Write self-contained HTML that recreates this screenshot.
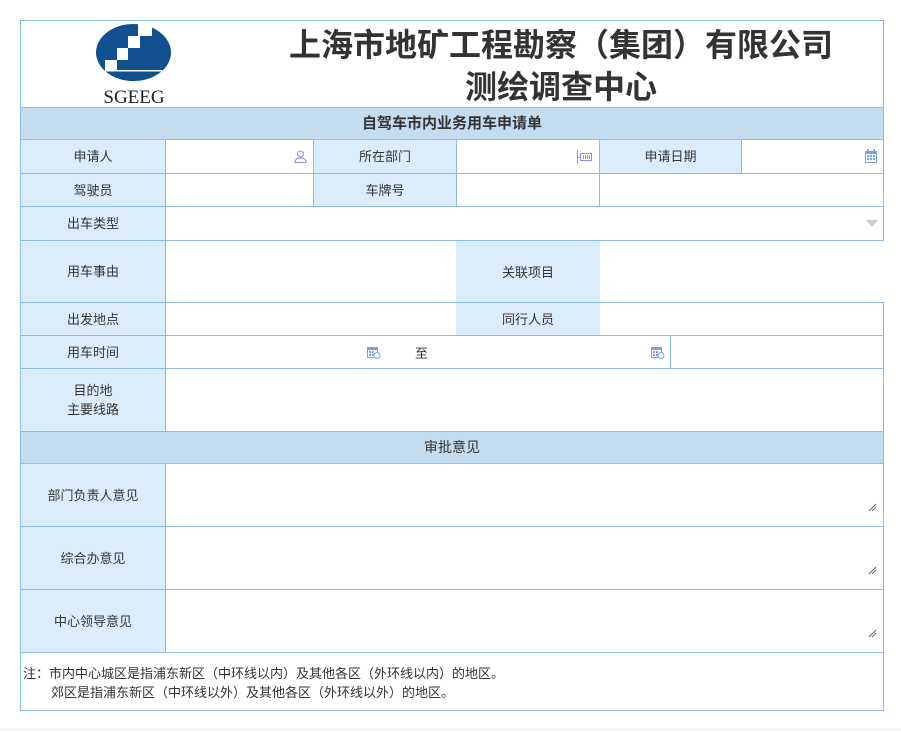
<!DOCTYPE html>
<html><head><meta charset="utf-8">
<style>
*{margin:0;padding:0;box-sizing:border-box}
body{width:901px;height:732px;background:#fff;position:relative;overflow:hidden;font-family:"Liberation Sans","Noto Sans CJK SC",sans-serif;font-size:13px;color:#333}
.c{position:absolute;border:1px solid #8cbbe3;display:flex;align-items:center;justify-content:center;text-align:center;line-height:19px}
.l{background:#dbedfd}
.h{background:#c4dcf0}
.ic{position:absolute}
</style></head><body>
<div class="c" style="left:20px;top:20px;width:864px;height:88px"></div>
<svg class="ic" style="left:94px;top:22px" width="80" height="86" viewBox="0 0 80 86">
<ellipse cx="39.5" cy="30.5" rx="37.5" ry="28.5" fill="#11508f"/>
<rect x="44" y="0" width="14" height="14" fill="#fff"/>
<rect x="34" y="14" width="12" height="12" fill="#fff"/>
<rect x="23" y="26" width="11" height="12" fill="#fff"/>
<rect x="11" y="38" width="12" height="10" fill="#fff"/>
<rect x="11" y="48" width="57" height="1.5" fill="#fff"/>
<text x="40" y="81" text-anchor="middle" font-family="Liberation Serif,serif" font-size="19" fill="#222">SGEEG</text>
</svg>
<div style="position:absolute;left:261px;top:24px;width:600px;text-align:center;font-size:32px;font-weight:bold;line-height:42px;color:#333">上海市地矿工程勘察（集团）有限公司<br>测绘调查中心</div>

<div class="c h" style="left:20px;top:107px;width:864px;height:33px;font-size:15px;font-weight:bold">自驾车市内业务用车申请单</div>

<div class="c l" style="left:20px;top:139px;width:146px;height:35px">申请人</div>
<div class="c" style="left:165px;top:139px;width:149px;height:35px"></div>
<div class="c l" style="left:313px;top:139px;width:144px;height:35px">所在部门</div>
<div class="c" style="left:456px;top:139px;width:144px;height:35px"></div>
<div class="c l" style="left:599px;top:139px;width:143px;height:35px">申请日期</div>
<div class="c" style="left:741px;top:139px;width:143px;height:35px"></div>

<div class="c l" style="left:20px;top:173px;width:146px;height:34px">驾驶员</div>
<div class="c" style="left:165px;top:173px;width:149px;height:34px"></div>
<div class="c l" style="left:313px;top:173px;width:144px;height:34px">车牌号</div>
<div class="c" style="left:456px;top:173px;width:144px;height:34px"></div>
<div class="c" style="left:599px;top:173px;width:285px;height:34px"></div>

<div class="c l" style="left:20px;top:206px;width:146px;height:35px">出车类型</div>
<div class="c" style="left:165px;top:206px;width:719px;height:35px"></div>

<div class="c l" style="left:20px;top:240px;width:146px;height:63px">用车事由</div>
<div class="c" style="left:165px;top:240px;width:292px;height:63px;border-right:none;border-left:none"></div>
<div class="c l" style="left:456px;top:240px;width:144px;height:63px;border:none;border-top:1px solid #8cbbe3">关联项目</div>
<div class="c" style="left:599px;top:240px;width:285px;height:63px;border-right:none;border-left:none"></div>

<div class="c l" style="left:20px;top:302px;width:146px;height:34px">出发地点</div>
<div class="c" style="left:165px;top:302px;width:292px;height:34px;border-right:none"></div>
<div class="c l" style="left:456px;top:302px;width:144px;height:34px;border:none;border-top:1px solid #8cbbe3;border-bottom:1px solid #8cbbe3">同行人员</div>
<div class="c" style="left:599px;top:302px;width:285px;height:34px;border-left:none"></div>

<div class="c l" style="left:20px;top:335px;width:146px;height:34px">用车时间</div>
<div class="c" style="left:165px;top:335px;width:506px;height:34px"></div>
<div style="position:absolute;left:415px;top:343px;font-size:13px">至</div>
<div class="c" style="left:670px;top:335px;width:214px;height:34px"></div>

<div class="c l" style="left:20px;top:368px;width:146px;height:64px">目的地<br>主要线路</div>
<div class="c" style="left:165px;top:368px;width:719px;height:64px"></div>

<div class="c h" style="left:20px;top:431px;width:864px;height:33px;font-size:14px">审批意见</div>

<div class="c l" style="left:20px;top:463px;width:146px;height:64px">部门负责人意见</div>
<div class="c" style="left:165px;top:463px;width:719px;height:64px"></div>
<div class="c l" style="left:20px;top:526px;width:146px;height:64px">综合办意见</div>
<div class="c" style="left:165px;top:526px;width:719px;height:64px"></div>
<div class="c l" style="left:20px;top:589px;width:146px;height:64px">中心领导意见</div>
<div class="c" style="left:165px;top:589px;width:719px;height:64px"></div>

<div class="c" style="left:20px;top:652px;width:864px;height:59px;display:block;text-align:left;padding:11px 0 0 2px;line-height:19px">注：市内中心城区是指浦东新区（中环线以内）及其他各区（外环线以内）的地区。<br><span style="padding-left:28px">郊区是指浦东新区（中环线以外）及其他各区（外环线以外）的地区。</span></div>
<div style="position:absolute;left:0;top:729px;width:901px;height:1px;background:#eee"></div>

<svg class="ic" style="left:294px;top:150px" width="13" height="13" viewBox="0 0 13 13" fill="none" stroke="#8f8fe8" stroke-width="1"><circle cx="6.5" cy="4" r="3"/><path d="M1 12.5h11c0-3-2-4-3.5-4.5H4.5C3 8.5 1 9.5 1 12.5z"/></svg>
<svg class="ic" style="left:576px;top:150px" width="18" height="14" viewBox="0 0 18 14" fill="none" stroke="#8f8fe8" stroke-width="1"><path d="M1.5 0v14M1.5 7h3"/><rect x="4.5" y="3.5" width="11" height="7"/><path d="M7.5 5v4M9.5 5v4M11.5 5v4M13.5 5v4"/></svg>
<svg class="ic" style="left:864px;top:149px" width="14" height="15" viewBox="0 0 14 15"><rect x="1" y="2" width="12" height="12" fill="#7b9ff0"/><rect x="2" y="5" width="10" height="8" fill="#fff"/><g fill="#7b9ff0"><rect x="3" y="6" width="2" height="2"/><rect x="6" y="6" width="2" height="2"/><rect x="9" y="6" width="2" height="2"/><rect x="3" y="9" width="2" height="2"/><rect x="6" y="9" width="2" height="2"/><rect x="9" y="9" width="2" height="2"/><rect x="3" y="0" width="1.5" height="3"/><rect x="9.5" y="0" width="1.5" height="3"/></g></svg>
<svg class="ic" style="left:866px;top:220px" width="12" height="8" viewBox="0 0 12 8"><path d="M0 0h12L6 7z" fill="#ccc"/></svg>
<svg class="ic" style="left:366px;top:345px" width="15" height="14" viewBox="0 0 15 14"><rect x="1" y="2" width="11" height="11" fill="#7b9ff0"/><rect x="2" y="5" width="9" height="7" fill="#fff"/><g fill="#7b9ff0"><rect x="3" y="6" width="2" height="2"/><rect x="6" y="6" width="2" height="2"/><rect x="3" y="9" width="2" height="2"/><rect x="6" y="9" width="2" height="2"/></g><circle cx="11" cy="10.5" r="3" fill="#fff" stroke="#7b9ff0"/></svg>
<svg class="ic" style="left:650px;top:345px" width="15" height="14" viewBox="0 0 15 14"><rect x="1" y="2" width="11" height="11" fill="#7b9ff0"/><rect x="2" y="5" width="9" height="7" fill="#fff"/><g fill="#7b9ff0"><rect x="3" y="6" width="2" height="2"/><rect x="6" y="6" width="2" height="2"/><rect x="3" y="9" width="2" height="2"/><rect x="6" y="9" width="2" height="2"/></g><circle cx="11" cy="10.5" r="3" fill="#fff" stroke="#7b9ff0"/></svg>
<svg class="ic" style="left:868px;top:503px" width="9" height="9" viewBox="0 0 9 9" stroke="#666"><path d="M1 8L8 1M4 8L8 4"/></svg>
<svg class="ic" style="left:868px;top:566px" width="9" height="9" viewBox="0 0 9 9" stroke="#666"><path d="M1 8L8 1M4 8L8 4"/></svg>
<svg class="ic" style="left:868px;top:629px" width="9" height="9" viewBox="0 0 9 9" stroke="#666"><path d="M1 8L8 1M4 8L8 4"/></svg>
</body></html>
